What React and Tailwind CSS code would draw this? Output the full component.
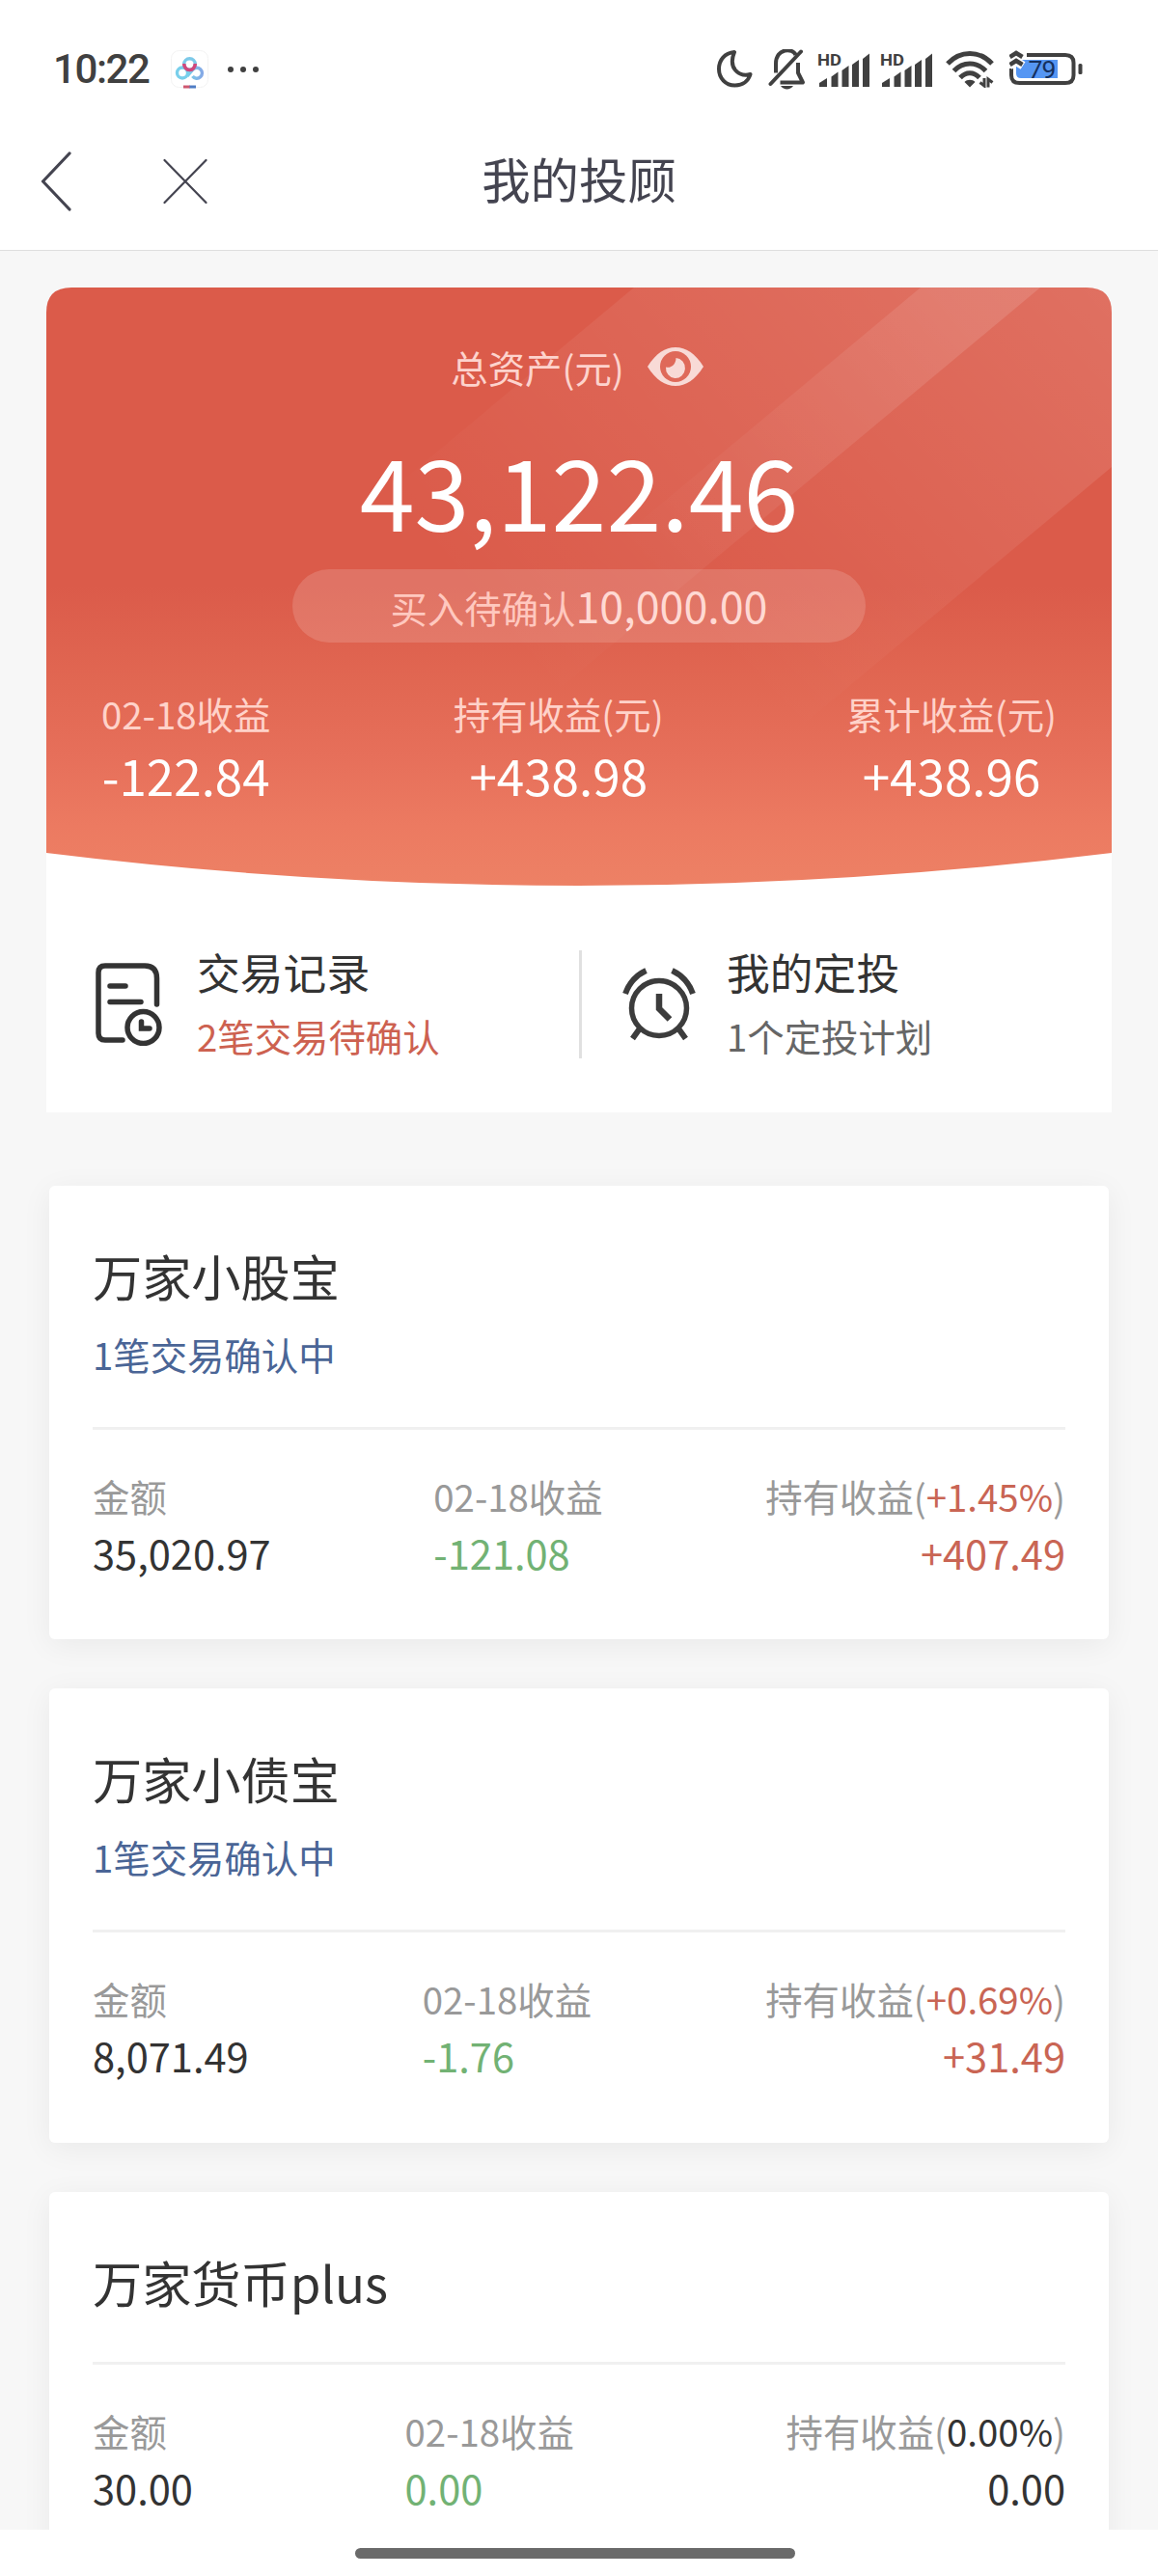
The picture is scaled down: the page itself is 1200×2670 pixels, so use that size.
const stats = [
  { label: '02-18收益', value: '-122.84' },
  { label: '持有收益(元)', value: '+438.98' },
  { label: '累计收益(元)', value: '+438.96' },
]

const funds = [
  { name: '万家小股宝', pending: '1笔交易确认中', amount: '35,020.97', day: '-121.08', rate: '+1.45%', hold: '+407.49', up: true },
  { name: '万家小债宝', pending: '1笔交易确认中', amount: '8,071.49', day: '-1.76', rate: '+0.69%', hold: '+31.49', up: true },
  { name: '万家货币plus', pending: null, amount: '30.00', day: '0.00', rate: '0.00%', hold: '0.00', up: false },
]

function CloudIcon() {
  return (
    <svg width="40" height="40" viewBox="0 0 40 40" fill="none" className="ml-5 shrink-0">
      <defs>
        <linearGradient id="knot" x1="0" y1="0" x2="1" y2="0">
          <stop offset="0" stopColor="#7ad3ea" />
          <stop offset="1" stopColor="#84a9e6" />
        </linearGradient>
      </defs>
      <rect x="0.5" y="0.5" width="38" height="38" rx="8" stroke="#f3f3f3" />
      <path d="M17 27L22.500 20.500A5.500 5.500 0 1 1 22.500 27" stroke="url(#knot)" strokeWidth="3.400" />
      <circle cx="12" cy="23.500" r="5.500" stroke="#79cfeb" strokeWidth="3.400" />
      <circle cx="19.500" cy="14.500" r="5.800" stroke="#7cc9e8" strokeWidth="3.400" />
      <path d="M13.700 14A5.800 6.500 0 0 0 25.300 14" stroke="#d0487c" strokeWidth="3.600" />
      <path d="M13 38h7" stroke="#cf5870" strokeWidth="3" />
      <path d="M19.500 38h6.500" stroke="#4e7cc4" strokeWidth="3" />
    </svg>
  )
}

function MoonIcon() {
  return (
    <svg width="38" height="40" viewBox="0 0 38 40" fill="none" stroke="#404040" strokeWidth="4" strokeLinejoin="round">
      <path d="M19 3C9 4 3 11 3 20.500C3 30 10 37.500 19.500 37.500C27.500 37.500 33.500 33 35.500 26C24 29 12 20 19 3Z" />
    </svg>
  )
}

function BellOffIcon() {
  return (
    <svg width="40" height="42" viewBox="0 0 40 42" fill="none" stroke="#404040" strokeWidth="4">
      <path d="M8 24.500V15C8 -1.500 26 -1.500 28.500 6" />
      <path d="M31 14V24.500L36 34.500H12.500" strokeLinejoin="round" />
      <path d="M2.500 36L34 2.500" strokeLinecap="round" />
      <path d="M13 38C16 42.500 23 42.500 26 38Z" fill="#404040" stroke="none" />
    </svg>
  )
}

function SignalIcon() {
  return (
    <svg width="55" height="40" viewBox="0 -4 55 40" fill="#404040" className="overflow-visible">
      <text x="0" y="13" fontSize="17" fontWeight="700" fontFamily="Roboto, sans-serif" textLength="25" lengthAdjust="spacingAndGlyphs">HD</text>
      <path d="M2 35V31L10 26V35Z" strokeLinejoin="round" />
      <path d="M14.500 35V24.500L21.500 19.500V35Z" />
      <path d="M25.500 35V18L32.500 13V35Z" />
      <path d="M36 35V12L43 7V35Z" />
      <path d="M47 35V6L54 0.500V35Z" />
    </svg>
  )
}

function WifiIcon() {
  return (
    <svg width="50" height="40" viewBox="0 0 50 40" fill="none" stroke="#404040" strokeWidth="5">
      <path d="M2 15C15 1 35 1 48 15" />
      <path d="M8.500 22.500C18 12.500 32 12.500 41.500 22.500" />
      <path d="M15 29.500C21 23 29 23 35 29.500" />
      <path d="M19.500 34C22 31 28 31 30.500 34L25 39.500Z" fill="#404040" stroke="none" />
      <path d="M40 30V38L35.500 34.500M44 39.500V31L48.500 34.500" strokeWidth="3" />
    </svg>
  )
}

function BatteryIcon() {
  return (
    <svg width="76" height="42" viewBox="0 0 76 42" fill="none">
      <path d="M7 11H50V30H12Q7 30 7 25Z" fill="#5596f3" />
      <path d="M18 6H58Q66.500 6 66.500 14V27Q66.500 35 58 35H10.500Q2 35 2 27V20" stroke="#404040" strokeWidth="4" />
      <path d="M0 9L7 4.500L14 9M0 17L7 12.500L14 17" stroke="#fff" strokeWidth="9" />
      <path d="M0.500 8L7 4L13.500 8M0.500 16L7 12L13.500 16" stroke="#404040" strokeWidth="4.500" />
      <rect x="71.500" y="15" width="4" height="11" rx="1.500" fill="#404040" />
      <text x="19.500" y="30" fontSize="26.500" fontFamily="Roboto, sans-serif" fill="#16305e" textLength="29">79</text>
    </svg>
  )
}

function EyeIcon() {
  return (
    <svg width="58" height="40" viewBox="0 0 58 40" className="ml-6">
      <path d="M0 20C9 6 18 0 29 0S49 6 58 20C49 34 40 40 29 40S9 34 0 20Z" fill="#f8dad6" />
      <circle cx="29" cy="20" r="16" fill="#df6959" />
      <path d="M29.500 11A10 10.500 0 1 1 19 20.500C24 22 29.500 18 29.500 11Z" fill="#f8dad6" />
    </svg>
  )
}

function RecordIcon() {
  return (
    <svg width="70" height="86" viewBox="0 0 70 86" fill="none" stroke="#333" strokeWidth="5.500" strokeLinecap="round">
      <path d="M63.500 43V16Q63.500 3 51 3H10Q3 3 3 10V73Q3 80 10 80H28" />
      <path d="M15 24H31M15 40.500H47" />
      <circle cx="49.500" cy="67" r="16.500" />
      <path d="M47.500 61V68H56" />
    </svg>
  )
}

function AlarmIcon() {
  return (
    <svg width="76" height="76" viewBox="0 0 76 76" fill="none" stroke="#3c3c3c" strokeWidth="5.500">
      <ellipse cx="38" cy="42" rx="28.500" ry="28.500" />
      <path d="M3 27Q9 10 24.500 3M73 27Q67 10 51.500 3" strokeWidth="6" />
      <path d="M38 27V42.500L49 53.500" strokeWidth="6.500" />
      <path d="M18 63L10.500 73.500M58 63L65.500 73.500" strokeWidth="6" />
    </svg>
  )
}

// Red panel with the light bands and the curved lower edge
function HeroBackground() {
  return (
    <svg className="absolute inset-0" width="1104" height="620" viewBox="0 0 1104 620">
      <defs>
        <linearGradient id="red" x1="0" y1="0" x2="0" y2="1">
          <stop offset="0" stopColor="#db5b4a" />
          <stop offset="0.500" stopColor="#db5b4a" />
          <stop offset="0.660" stopColor="#e16752" />
          <stop offset="0.780" stopColor="#e66f5a" />
          <stop offset="0.900" stopColor="#ec7a61" />
          <stop offset="1" stopColor="#ed8165" />
        </linearGradient>
        <linearGradient id="bandA" gradientUnits="userSpaceOnUse" x1="900" y1="-20" x2="460" y2="350">
          <stop offset="0" stopColor="#fff" stopOpacity="0.120" />
          <stop offset="1" stopColor="#fff" stopOpacity="0" />
        </linearGradient>
        <linearGradient id="bandB" gradientUnits="userSpaceOnUse" x1="1120" y1="20" x2="720" y2="400">
          <stop offset="0" stopColor="#fff" stopOpacity="0.130" />
          <stop offset="1" stopColor="#fff" stopOpacity="0" />
        </linearGradient>
        <clipPath id="panel">
          <path d="M0 26Q0 0 26 0H1078Q1104 0 1104 26V586Q828 620 552 620T0 586Z" />
        </clipPath>
      </defs>
      <g clipPath="url(#panel)">
        <rect width="1104" height="620" fill="url(#red)" />
        <path d="M609 0H1030L287 620H-134Z" fill="url(#bandA)" />
        <path d="M906 0H1327L584 620H163Z" fill="url(#bandB)" />
      </g>
    </svg>
  )
}

function StatusBar() {
  return (
    <div className="flex h-[120px] items-start justify-between pr-[78px] pl-[55px]">
      <div className="flex items-center pt-[52px]">
        <span className="w-[102px] font-[Roboto,sans-serif] text-[42px] leading-[40px] font-medium tracking-[-1.4px] text-[#404040]">10:22</span>
        <CloudIcon />
        <div className="ml-[19px] flex gap-[7px]">
          <i className="size-1.5 rounded-full bg-[#404040]" />
          <i className="size-1.5 rounded-full bg-[#404040]" />
          <i className="size-1.5 rounded-full bg-[#404040]" />
        </div>
      </div>
      <div className="flex items-start pt-[51px]">
        <MoonIcon />
        <div className="ml-4"><BellOffIcon /></div>
        <div className="ml-[11px]"><SignalIcon /></div>
        <div className="ml-[10px]"><SignalIcon /></div>
        <div className="ml-[13px]"><WifiIcon /></div>
        <div className="ml-4"><BatteryIcon /></div>
      </div>
    </div>
  )
}

function NavBar() {
  return (
    <div className="grid h-[140px] grid-cols-[1fr_auto_1fr] border-b border-[#dedede]">
      <div className="flex items-start">
        <svg width="32" height="62" viewBox="0 0 32 62" fill="none" stroke="#444450" strokeWidth="3.200" className="mt-[37px] ml-[42px]" strokeLinecap="round" strokeLinejoin="round">
          <path d="M30 2L2.500 31L30 60" />
        </svg>
        <svg width="46" height="48" viewBox="0 0 46 48" fill="none" stroke="#444450" strokeWidth="2.200" className="mt-[44px] ml-[95px]" strokeLinecap="round">
          <path d="M1.500 2L44.500 46M44.500 2L1.500 46" />
        </svg>
      </div>
      <h1 className="mt-[33px] text-[50.4px] leading-[64px] text-[#444450]">我的投顾</h1>
    </div>
  )
}

function Hero() {
  return (
    <div className="relative h-[620px]">
      <HeroBackground />
      <div className="relative pt-[54px] text-white">
        <div className="flex h-[56px] items-center justify-center pr-1 text-[38.4px] leading-[56px]">
          <span className="text-[#fdd3cd]">总资产(元)</span>
          <EyeIcon />
        </div>
        <div className="mt-[46px] text-center text-[102.4px] leading-[104px]">43,122.46</div>
        <div className="mx-auto mt-8 flex h-[76px] w-[594px] items-baseline justify-center rounded-full bg-white/15 leading-[73px]">
          <span className="text-[38.4px] text-[#ffc8bf]">买入待确认</span>
          <span className="text-[44.8px] text-[#ffd9d3]">10,000.00</span>
        </div>
        <div className="mt-[45px] flex justify-between px-[57px] text-center">
          {stats.map((s) => (
            <div key={s.label}>
              <div className="text-[38.4px] leading-[56px] text-[#ffd2c9]">{s.label}</div>
              <div className="mt-1 text-[51.2px] leading-[64px]">{s.value}</div>
            </div>
          ))}
        </div>
      </div>
    </div>
  )
}

function Actions() {
  return (
    <div className="flex h-[235px] pt-[61px]">
      <div className="flex w-[552px] pl-[51px]">
        <div className="mt-[19px] w-[70px]"><RecordIcon /></div>
        <div className="ml-[35px]">
          <div className="text-[44.8px] leading-[56px] text-[#333]">交易记录</div>
          <div className="mt-3 text-[38.4px] leading-[52px] text-[#cd6150]">2笔交易待确认</div>
        </div>
      </div>
      <div className="mt-1.5 h-[112px] w-[3px] bg-[#e0e0e0]" />
      <div className="flex pl-[42px]">
        <div className="mt-6"><AlarmIcon /></div>
        <div className="ml-8">
          <div className="text-[44.8px] leading-[56px] text-[#333]">我的定投</div>
          <div className="mt-3 text-[38.4px] leading-[52px] text-[#666]">1个定投计划</div>
        </div>
      </div>
    </div>
  )
}

function FundCard({ fund }) {
  const tone = fund.up ? 'text-[#c96554]' : 'text-[#333]'
  return (
    <div className="rounded-[6px] bg-white px-[44.8px] pt-[61px] pb-[62.4px] shadow-[0_6px_32px_rgba(0,0,0,0.06)]">
      <h2 className="text-[51.2px] leading-[64px] text-[#333]">{fund.name}</h2>
      {fund.pending && (
        <div className="mt-6 text-[38.4px] leading-[50px] text-[#4a6596]">{fund.pending}</div>
      )}
      <div className="mt-[51px] h-[3px] bg-[#f0f0f0]" />
      <div className="mt-[42px] flex justify-between text-[38.4px] leading-[52px] text-[#999]">
        <div>
          <div>金额</div>
          <div className="mt-[5px] text-[41.6px] leading-[56px] text-[#333]">{fund.amount}</div>
        </div>
        <div>
          <div>02-18收益</div>
          <div className="mt-[5px] text-[41.6px] leading-[56px] text-[#72b274]">{fund.day}</div>
        </div>
        <div className="text-right">
          <div>持有收益(<span className={tone}>{fund.rate}</span>)</div>
          <div className={`mt-[5px] text-[41.6px] leading-[56px] ${tone}`}>{fund.hold}</div>
        </div>
      </div>
    </div>
  )
}

export default function App() {
  return (
    <div className="flex h-[2670px] w-[1200px] flex-col overflow-hidden bg-white font-['Noto_Sans_CJK_SC',sans-serif]">
      <StatusBar />
      <NavBar />
      <main className="h-[2362px] overflow-hidden bg-[#f7f7f7] pt-[38px]">
        <section className="mx-12 rounded-t-[26px] bg-white">
          <Hero />
          <Actions />
        </section>
        <div className="mx-[51.2px] mt-[75.8px] flex flex-col gap-[51.2px]">
          {funds.map((f) => (
            <FundCard key={f.name} fund={f} />
          ))}
        </div>
      </main>
      <div className="flex h-12 justify-center pt-[19px]">
        <div className="mr-2 h-[11px] w-[456px] rounded-full bg-[#6a6a6a]" />
      </div>
    </div>
  )
}
